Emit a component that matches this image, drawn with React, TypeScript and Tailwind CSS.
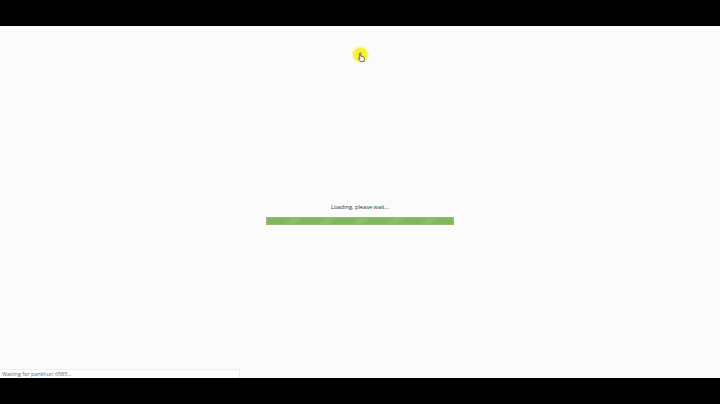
export default function App() {
  return (
    <div className="h-[404px] w-[720px] overflow-hidden bg-black flex flex-col font-['Open_Sans',sans-serif]">
      <div className="h-[26px] shrink-0 bg-black" />
      <main className="relative h-[352px] shrink-0 bg-[#fbfbfb] flex flex-col items-center">
        <div className="mt-[176px] h-[11px] text-[5.7px] leading-[11px] text-[#333333]">Loading, please wait...</div>
        <div className="mt-[4px] h-[8px] w-[188px] border border-[#9ab87c] bg-[repeating-linear-gradient(-45deg,#7fb85c_0px,#7fb85c_14px,#8abf69_17px,#8abf69_21px,#7fb85c_24px)]" />

        {/* highlighted mouse pointer */}
        <div className="absolute left-[352.500px] top-[20.500px] h-[15px] w-[15px] rounded-full bg-[#f7f02a] blur-[1px]" />
        <svg className="absolute left-[358px] top-[25.500px]" width="7" height="11" viewBox="0 0 8 12">
          <path
            d="M2 1.2c0-.9 1.3-.9 1.3 0v3.2l2.9.9c.8.3 1.2.8 1.1 1.6L6.900 10.500H2.800L.7 7.300c-.4-.7.400-1.300 1-.7l.3.4z"
            fill="#ffffff"
            stroke="#333333"
            strokeWidth="0.8"
          />
        </svg>

        <div className="absolute bottom-0 left-0 h-[9px] w-[240px] border-t border-r border-[#eeeeee] bg-white pl-[2px] text-[5.4px] leading-[9px] text-[#666666]">
          Waiting for pankhuri 6585...
        </div>
      </main>
      <div className="flex-1 bg-black" />
    </div>
  );
}
